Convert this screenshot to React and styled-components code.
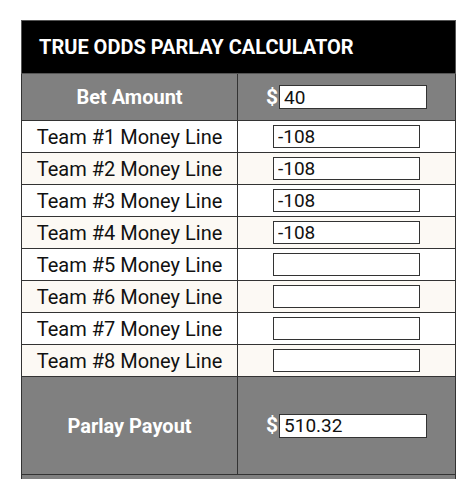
import React from "react";
import styled, { createGlobalStyle } from "styled-components";

const Global = createGlobalStyle`
  html, body { margin: 0; padding: 0; background: #fff; }
  body { font-family: Roboto, "Liberation Sans", Arial, sans-serif; }
`;

const Page = styled.div`
  padding: 20px 19px 0 21px;
  height: 479px;
  box-sizing: border-box;
  overflow: hidden;
`;

const Calc = styled.table`
  width: 434px;
  border-collapse: collapse;
  table-layout: fixed;
  border: 1px solid #333;
`;

const Title = styled.th`
  background: #000;
  color: #fff;
  height: 52px;
  padding: 0 0 0 17px;
  text-align: left;
  font-size: 20px;
  font-weight: 700;
  border: 1px solid #555;
`;

const Row = styled.tr`
  background: ${(p) => (p.$tone === "gray" ? "#808080" : p.$tone === "cream" ? "#fcf9f4" : "#fff")};
  height: ${(p) => p.$h}px;
`;

const Label = styled.td`
  border: 1px solid #333;
  padding: 0;
  text-align: center;
  vertical-align: middle;
  font-size: 20px;
  font-weight: ${(p) => (p.$strong ? 700 : 400)};
  color: ${(p) => (p.$strong ? "#fff" : "#111")};
  line-height: 1;
`;

const ValueCell = styled.td`
  border: 1px solid #333;
  padding: 0;
  vertical-align: middle;
`;

const FieldWrap = styled.div`
  display: flex;
  align-items: center;
  justify-content: center;
  gap: 1px;
`;

const Dollar = styled.span`
  color: #fff;
  font-weight: 700;
  font-size: 21px;
  line-height: 1;
`;

const Field = styled.input`
  box-sizing: border-box;
  width: ${(p) => (p.$money ? 148 : 147)}px;
  height: ${(p) => (p.$money ? 24 : 23)}px;
  border: 1px solid #333;
  background: #fff;
  padding: 0 0 0 4px;
  margin: 0;
  font-family: Roboto, "Liberation Sans", Arial, sans-serif;
  font-size: 19px;
  color: #111;
  outline: none;
`;

const teams = ["-108", "-108", "-108", "-108", "", "", "", ""];

export default function App() {
  return (
    <>
      <Global />
      <Page>
        <Calc>
          <colgroup>
            <col style={{ width: 216 }} />
            <col style={{ width: 218 }} />
          </colgroup>
          <thead>
            <tr>
              <Title colSpan={2}>TRUE ODDS PARLAY CALCULATOR</Title>
            </tr>
          </thead>
          <tbody>
            <Row $tone="gray" $h={47}>
              <Label $strong>Bet Amount</Label>
              <ValueCell>
                <FieldWrap>
                  <Dollar>$</Dollar>
                  <Field $money defaultValue="40" />
                </FieldWrap>
              </ValueCell>
            </Row>
            {teams.map((v, i) => (
              <Row key={i} $tone={i % 2 ? "cream" : "white"} $h={32}>
                <Label>Team #{i + 1} Money Line</Label>
                <ValueCell>
                  <FieldWrap>
                    <Field defaultValue={v} />
                  </FieldWrap>
                </ValueCell>
              </Row>
            ))}
            <Row $tone="gray" $h={98}>
              <Label $strong>Parlay Payout</Label>
              <ValueCell>
                <FieldWrap>
                  <Dollar>$</Dollar>
                  <Field $money readOnly defaultValue="510.32" />
                </FieldWrap>
              </ValueCell>
            </Row>
            <Row $tone="gray" $h={40}>
              <ValueCell colSpan={2} />
            </Row>
          </tbody>
        </Calc>
      </Page>
    </>
  );
}
